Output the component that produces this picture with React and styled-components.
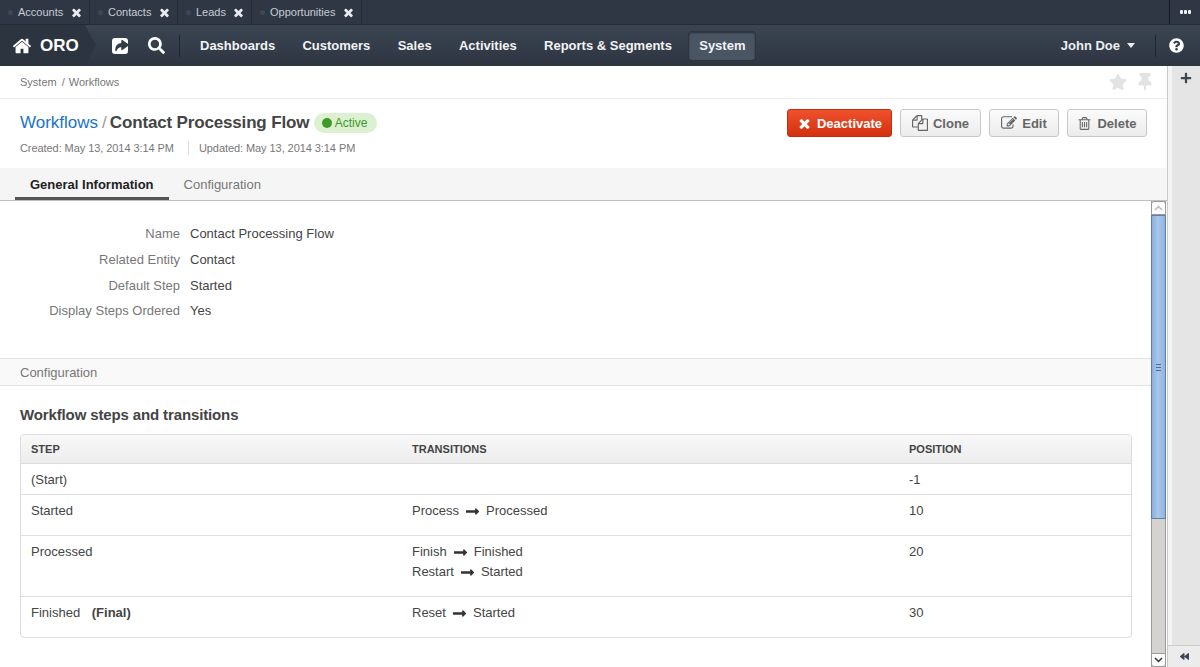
import React from "react";
import styled, { createGlobalStyle } from "styled-components";
import { FaSearch, FaQuestionCircle, FaStar, FaThumbtack, FaPlus, FaBackward, FaLongArrowAltRight } from "react-icons/fa";

const Global = createGlobalStyle`
  html, body { margin: 0; padding: 0; height: 100%; overflow: hidden; }
  body { font-family: "Liberation Sans", Arial, sans-serif; font-size: 13px; color: #444; background: #fff; }
  * { box-sizing: border-box; }
`;

const GlyphSvg = styled.svg`
  width: ${p => p.$size}px; height: ${p => p.$size}px; fill: currentColor; flex: none; display: block;
`;
const Glyph = ({ d, size }) => (
  <GlyphSvg $size={size} viewBox="0 0 1792 1792"><path d={d} /></GlyphSvg>
);
const HOME = "M1472 992v480q0 26-19 45t-45 19h-384v-384h-256v384h-384q-26 0-45-19t-19-45v-480q0-1 .5-3t.5-3l575-474 575 474q1 2 1 6zm223-69l-62 74q-8 9-21 11h-3q-13 0-21-6l-692-577-692 577q-12 8-24 6-13-2-21-11l-62-74q-8-10-7-23.5t11-21.5l719-599q32-26 76-26t76 26l244 204v-195q0-14 9-23t23-9h192q14 0 23 9t9 23v408l219 182q10 8 11 21.5t-7 23.5z";
const TIMES = "M1490 1322q0 40-28 68l-136 136q-28 28-68 28t-68-28l-294-294-294 294q-28 28-68 28t-68-28l-136-136q-28-28-28-68t28-68l294-294-294-294q-28-28-28-68t28-68l136-136q28-28 68-28t68 28l294 294 294-294q28-28 68-28t68 28l136 136q28 28 28 68t-28 68l-294 294 294 294q28 28 28 68z";
const FILES = "M1696 384q40 0 68 28t28 68v1216q0 40-28 68t-68 28h-960q-40 0-68-28t-28-68v-288h-544q-40 0-68-28t-28-68v-672q0-40 20-88t48-76l408-408q28-28 76-48t88-20h416q40 0 68 28t28 68v328q68-40 128-40h416zm-544 213l-299 299h299v-299zm-640-384l-299 299h299v-299zm196 647l316-316v-416h-384v416q0 40-28 68t-68 28h-416v640h512v-256q0-40 20-92t48-76zm956 804v-1152h-384v416q0 40-28 68t-68 28h-416v640h768z";
const TRASH = "M704 736v576q0 14-9 23t-23 9h-64q-14 0-23-9t-9-23v-576q0-14 9-23t23-9h64q14 0 23 9t9 23zm256 0v576q0 14-9 23t-23 9h-64q-14 0-23-9t-9-23v-576q0-14 9-23t23-9h64q14 0 23 9t9 23zm256 0v576q0 14-9 23t-23 9h-64q-14 0-23-9t-9-23v-576q0-14 9-23t23-9h64q14 0 23 9t9 23zm128 724v-948h-896v948q0 22 7 40.5t14.5 27 10.5 8.5h832q3 0 10.5-8.5t14.5-27 7-40.5zm-672-1076h448l-48-117q-7-9-17-11h-317q-10 2-17 11zm928 32v64q0 14-9 23t-23 9h-96v948q0 83-47 143.5t-113 60.5h-832q-66 0-113-58.5t-47-141.5v-952h-96q-14 0-23-9t-9-23v-64q0-14 9-23t23-9h309l70-167q15-37 54-63t79-26h320q40 0 79 26t54 63l70 167h309q14 0 23 9t9 23z";
const EDIT = "M888 1184l116-116-152-152-116 116v56h96v96h56zm440-720q-16-16-33 1l-350 350q-17 17-1 33t33-1l350-350q17-17 1-33zm80 594v190q0 119-84.5 203.5t-203.5 84.5h-832q-119 0-203.5-84.5t-84.5-203.5v-832q0-119 84.5-203.5t203.5-84.5h832q63 0 117 25 15 7 18 23 3 17-9 29l-49 49q-14 14-32 8-23-6-45-6h-832q-66 0-113 47t-47 113v832q0 66 47 113t113 47h832q66 0 113-47t47-113v-126q0-13 9-22l64-64q15-15 35-7t20 29zm-96-738l288 288-672 672h-288v-288zm444 132l-92 92-288-288 92-92q28-28 68-28t68 28l152 152q28 28 28 68t-28 68z";

const Page = styled.div`
  width: 1200px; height: 667px; display: flex; flex-direction: column; overflow: hidden;
`;
const PinBar = styled.div`
  height: 25px; flex: none; display: flex; background: #2f3744; border-bottom: 1px solid #252b35;
`;
const PinTab = styled.div`
  display: flex; align-items: center; height: 24px; width: ${p => p.$w}px; padding-left: 8px;
  border-right: 1px solid #262c36; color: #c6ccd4; font-size: 11px;
`;
const PinDot = styled.span`
  width: 5px; height: 5px; border-radius: 50%; background: #3d4756; margin-right: 5px; flex: none;
`;
const PinClose = styled.span`
  margin-left: auto; margin-right: 6px; display: flex; color: #e8eaec;
`;
const PinSpacer = styled.div` flex: 1; `;
const PinMore = styled.div`
  width: 31px; height: 24px; border-left: 1px solid #14181f; display: flex; align-items: center; justify-content: center; gap: 1px;
`;
const MoreDot = styled.span` width: 3px; height: 4px; border-radius: 1px; background: #eef0f2; `;

const NavBar = styled.div`
  height: 41px; flex: none; display: flex; align-items: center; color: #fff;
  background: linear-gradient(#3b4552, #2d3541);
`;
const Brand = styled.div`
  position: relative; height: 41px; width: 85px; flex: none; display: flex; align-items: center; padding-left: 12px;
  background: #2c3440; font-size: 17px; font-weight: 700; gap: 8px;
  &::after {
    content: ""; position: absolute; left: 85px; top: 0; width: 0; height: 0;
    border-top: 20.5px solid transparent; border-bottom: 20.5px solid transparent; border-left: 11px solid #2c3440;
  }
`;
const IconButton = styled.div`
  display: flex; font-size: ${p => p.$size}px; margin-left: ${p => p.$left}px; color: #fff; flex: none; z-index: 1;
`;
const NavDivider = styled.div`
  width: 1px; height: 22px; background: #1f252d; margin: 0 ${p => p.$right}px 0 ${p => p.$left}px; flex: none;
`;
const NavItem = styled.div`
  height: 28px; line-height: 28px; padding: 0 10px; margin-right: 7.3px; font-size: 13px; font-weight: 700; border-radius: 3px; color: #f2f3f4;
  ${p => p.$active && `background: #4a5563; box-shadow: inset 0 1px 2px #2a313b, 0 0 0 1px #2d3540;`}
`;
const NavFill = styled.div` flex: 1; `;
const NavEnd = styled.div` flex: 0 0 16px; `;
const UserMenu = styled.div`
  display: flex; align-items: center; font-size: 13px; font-weight: 700; gap: 7px; color: #eceef0;
`;
const Caret = styled.span`
  width: 0; height: 0; border-left: 4.5px solid transparent; border-right: 4.5px solid transparent; border-top: 5px solid #eceef0;
`;

const Body = styled.div` flex: 1; display: flex; min-height: 0; `;
const Main = styled.div` width: 1168px; flex: none; display: flex; flex-direction: column; border-right: 1px solid #c9c9c9; `;
const SideBar = styled.div`
  flex: 1; background: #e5e5e5; border-left: 4px solid #f4f4f4; display: flex; flex-direction: column; align-items: center; justify-content: space-between; color: #3d4550;
`;
const SidePlus = styled.div` padding-top: 6px; display: flex; font-size: 12px; `;
const SideCollapse = styled.div`
  height: 22px; align-self: stretch; margin-left: -4px; background: #ececec; border-top: 1px solid #ccc; display: flex; align-items: center; justify-content: center; font-size: 9px; color: #3a4656;
`;

const Crumbs = styled.div`
  height: 33px; flex: none; display: flex; align-items: center; padding: 0 13px 0 20px; border-bottom: 1px solid #ececec;
  color: #777; font-size: 11px;
`;
const CrumbSep = styled.span` margin: 0 4px 0 5px; `;
const CrumbIcons = styled.div`
  margin-left: auto; display: flex; align-items: center; gap: 9px; color: #e3e3e3; font-size: 18px;
`;
const TitleBlock = styled.div`
  height: 69px; flex: none; display: flex; justify-content: space-between; padding: 11px 20px 0 20px;
`;
const TitleRow = styled.div` display: flex; align-items: center; height: 26px; font-size: 17px; `;
const TitleLink = styled.a` color: #1c73c9; text-decoration: none; `;
const TitleSep = styled.span` color: #999; margin: 0 3px 0 4px; `;
const TitleName = styled.span` font-weight: 700; color: #444; letter-spacing: -0.16px; `;
const Status = styled.span`
  margin-left: 5px; height: 20px; padding: 0 10px 1px 8px; border-radius: 10px; background: #dcf1d2; color: #3e9a26; font-size: 12px;
  display: inline-flex; align-items: center; gap: 2.5px;
`;
const StatusDot = styled.span` width: 10px; height: 10px; border-radius: 50%; background: #3e9a26; `;
const Meta = styled.div` display: flex; align-items: center; margin-top: 5px; color: #777; font-size: 11px; letter-spacing: -0.07px; `;
const MetaSep = styled.span` width: 1px; height: 14px; background: #ddd; margin: 0 10px 0 14px; `;
const Actions = styled.div` display: flex; gap: 8px; margin-top: -1px; `;
const ActionButton = styled.button`
  height: 28px; width: ${p => p.$w}px; border-radius: 3px; font: 700 13px "Liberation Sans", Arial, sans-serif; padding: 0;
  display: flex; align-items: center; justify-content: center; gap: 5px; color: #666;
  background: linear-gradient(#fbfbfb, #ececec); border: 1px solid #c8c8c8;
  ${p => p.$danger && `color: #fff; background: linear-gradient(#f0512d, #d3300e); border-color: #c92c0c;`}
`;
const TabsBar = styled.div`
  height: 33px; flex: none; display: flex; padding-left: 15px; background: #f5f5f5; border-bottom: 1px solid #bfbfbf;
`;
const TabItem = styled.div`
  height: 32px; padding: 0 15px; line-height: 34px; font-size: 13px;
  color: ${p => (p.$active ? "#222" : "#777")}; font-weight: ${p => (p.$active ? 700 : 400)};
  border-bottom: ${p => (p.$active ? "3px solid #555" : "none")};
`;

const ScrollArea = styled.div` flex: 1; display: flex; min-height: 0; `;
const Content = styled.div` flex: 1; min-width: 0; overflow: hidden; `;
const Details = styled.div`
  display: grid; grid-template-columns: 160px 1fr; column-gap: 10px; row-gap: 7.6px; padding: 24.4px 20px 0 20px; height: 157px; align-content: start; font-size: 13px; line-height: 18px;
`;
const DetailLabel = styled.div` color: #777; text-align: right; `;
const DetailValue = styled.div` color: #444; `;
const SectionBar = styled.div`
  height: 28px; line-height: 27px; padding-left: 20px; background: #f9f9f9; border-top: 1px solid #e3e3e3; border-bottom: 1px solid #e3e3e3; color: #777; font-size: 13px;
`;
const SubTitle = styled.h4` margin: 20px 0 10px 20px; height: 18px; line-height: 18px; font-size: 15px; letter-spacing: -0.13px; font-weight: 700; color: #444; `;
const Table = styled.div`
  margin: 0 20px; width: 1112px; border: 1px solid #ddd; border-radius: 4px; overflow: hidden;
`;
const Row = styled.div`
  display: grid; grid-template-columns: 381px 497px 1fr; padding: 6px 10px 0; height: ${p => p.$h}px; border-top: 1px solid #ddd; line-height: 20px; font-size: 13px;
`;
const HeadRow = styled(Row)`
  border-top: none; border-bottom: 1px solid #ddd; background: linear-gradient(#f8f8f8, #ededed); font-size: 11px; font-weight: 700; color: #444; align-items: center; padding: 0 10px;
`;
const FirstRow = styled(Row)` border-top: none; `;
const Transition = styled.div` display: flex; align-items: center; gap: 6px; height: 20px; `;
const Arrow = styled.span` display: flex; font-size: 15px; color: #333; `;
const Final = styled.b` margin-left: 8px; `;

const Scrollbar = styled.div`
  width: 15px; flex: none; margin-right: 1px; display: flex; flex-direction: column; background: #d4d3cf; border-left: 1px solid #9a9a9a; border-right: 1px solid #9a9a9a;
`;
const ScrollButton = styled.div`
  height: 14px; flex: none; background: #fcfcfc; border: 1px solid #999; margin: 0 -1px; border-radius: ${p => (p.$up ? "3px 3px 0 0" : "0 0 3px 3px")};
  display: flex; align-items: center; justify-content: center;
`;
const Thumb = styled.div`
  height: 304px; flex: none; margin: 0 -1px; border: 1px solid #5f7ea8;
  background: linear-gradient(90deg, #8caedb, #a9c7ec 45%, #8fb3e0); display: flex; flex-direction: column; align-items: center; justify-content: center; gap: 2px;
`;
const Grip = styled.span` width: 5px; height: 1px; background: #4d6c9b; `;

const ShareIcon = () => (
  <svg width="17" height="17" viewBox="0 0 17 17">
    <rect x="0" y="1" width="16" height="16" rx="3" fill="#fff" />
    <path d="M4 13.5C3.6 9 6 6.6 10 6.6V3.6L16.4 8 10 12.4V9.4C7.2 9.4 5 10.6 4 13.5Z" fill="#fff" stroke="#333b47" strokeWidth="1.4" strokeLinejoin="round" />
    <path d="M4 13.5C3.6 9 6 6.6 10 6.6V3.6L16.4 8 10 12.4V9.4C7.2 9.4 5 10.6 4 13.5Z" fill="#333b47" />
  </svg>
);

const pins = [["Accounts", 90], ["Contacts", 88], ["Leads", 74], ["Opportunities", 110]];

export default function App() {
  return (
    <Page>
      <Global />
      <PinBar>
        {pins.map(([t, w]) => (
          <PinTab key={t} $w={w}><PinDot />{t}<PinClose><Glyph d={TIMES} size={13} /></PinClose></PinTab>
        ))}
        <PinSpacer />
        <PinMore><MoreDot /><MoreDot /><MoreDot /></PinMore>
      </PinBar>
      <NavBar>
        <Brand><Glyph d={HOME} size={20} />ORO</Brand>
        <IconButton $size={17} $left={27}><ShareIcon /></IconButton>
        <IconButton $size={17} $left={19}><FaSearch /></IconButton>
        <NavDivider $left={14} $right={10} />
        <NavItem>Dashboards</NavItem>
        <NavItem>Customers</NavItem>
        <NavItem>Sales</NavItem>
        <NavItem>Activities</NavItem>
        <NavItem>Reports &amp; Segments</NavItem>
        <NavItem $active>System</NavItem>
        <NavFill />
        <UserMenu>John Doe <Caret /></UserMenu>
        <NavDivider $left={20} $right={13} />
        <IconButton $size={15} $left={0}><FaQuestionCircle /></IconButton>
        <NavEnd />
      </NavBar>
      <Body>
        <Main>
          <Crumbs>
            System<CrumbSep>/</CrumbSep>Workflows
            <CrumbIcons><FaStar /><FaThumbtack /></CrumbIcons>
          </Crumbs>
          <TitleBlock>
            <div>
              <TitleRow>
                <TitleLink>Workflows</TitleLink><TitleSep>/</TitleSep>
                <TitleName>Contact Processing Flow</TitleName>
                <Status><StatusDot />Active</Status>
              </TitleRow>
              <Meta>Created: May 13, 2014 3:14 PM<MetaSep />Updated: May 13, 2014 3:14 PM</Meta>
            </div>
            <Actions>
              <ActionButton $danger $w={105}><Glyph d={TIMES} size={15} />Deactivate</ActionButton>
              <ActionButton $w={81}><Glyph d={FILES} size={16} />Clone</ActionButton>
              <ActionButton $w={70}><Glyph d={EDIT} size={16} />Edit</ActionButton>
              <ActionButton $w={80}><Glyph d={TRASH} size={15} />Delete</ActionButton>
            </Actions>
          </TitleBlock>
          <TabsBar>
            <TabItem $active>General Information</TabItem>
            <TabItem>Configuration</TabItem>
          </TabsBar>
          <ScrollArea>
            <Content>
              <Details>
                <DetailLabel>Name</DetailLabel><DetailValue>Contact Processing Flow</DetailValue>
                <DetailLabel>Related Entity</DetailLabel><DetailValue>Contact</DetailValue>
                <DetailLabel>Default Step</DetailLabel><DetailValue>Started</DetailValue>
                <DetailLabel>Display Steps Ordered</DetailLabel><DetailValue>Yes</DetailValue>
              </Details>
              <SectionBar>Configuration</SectionBar>
              <SubTitle>Workflow steps and transitions</SubTitle>
              <Table>
                <HeadRow $h={29}><div>STEP</div><div>TRANSITIONS</div><div>POSITION</div></HeadRow>
                <FirstRow $h={30}><div>(Start)</div><div /><div>-1</div></FirstRow>
                <Row $h={41}><div>Started</div><Transition>Process <Arrow><FaLongArrowAltRight /></Arrow> Processed</Transition><div>10</div></Row>
                <Row $h={61}>
                  <div>Processed</div>
                  <div>
                    <Transition>Finish <Arrow><FaLongArrowAltRight /></Arrow> Finished</Transition>
                    <Transition>Restart <Arrow><FaLongArrowAltRight /></Arrow> Started</Transition>
                  </div>
                  <div>20</div>
                </Row>
                <Row $h={41}><div>Finished <Final>(Final)</Final></div><Transition>Reset <Arrow><FaLongArrowAltRight /></Arrow> Started</Transition><div>30</div></Row>
              </Table>
            </Content>
            <Scrollbar>
              <ScrollButton $up>
                <svg width="9" height="6" viewBox="0 0 9 6"><path d="M1 5l3.5-3.5L8 5" fill="none" stroke="#bbb" strokeWidth="1.5" /></svg>
              </ScrollButton>
              <Thumb><Grip /><Grip /><Grip /></Thumb>
              <NavFill />
              <ScrollButton>
                <svg width="9" height="6" viewBox="0 0 9 6"><path d="M1 1l3.5 3.5L8 1" fill="none" stroke="#333" strokeWidth="1.5" /></svg>
              </ScrollButton>
            </Scrollbar>
          </ScrollArea>
        </Main>
        <SideBar>
          <SidePlus><FaPlus /></SidePlus>
          <SideCollapse><FaBackward /></SideCollapse>
        </SideBar>
      </Body>
    </Page>
  );
}
